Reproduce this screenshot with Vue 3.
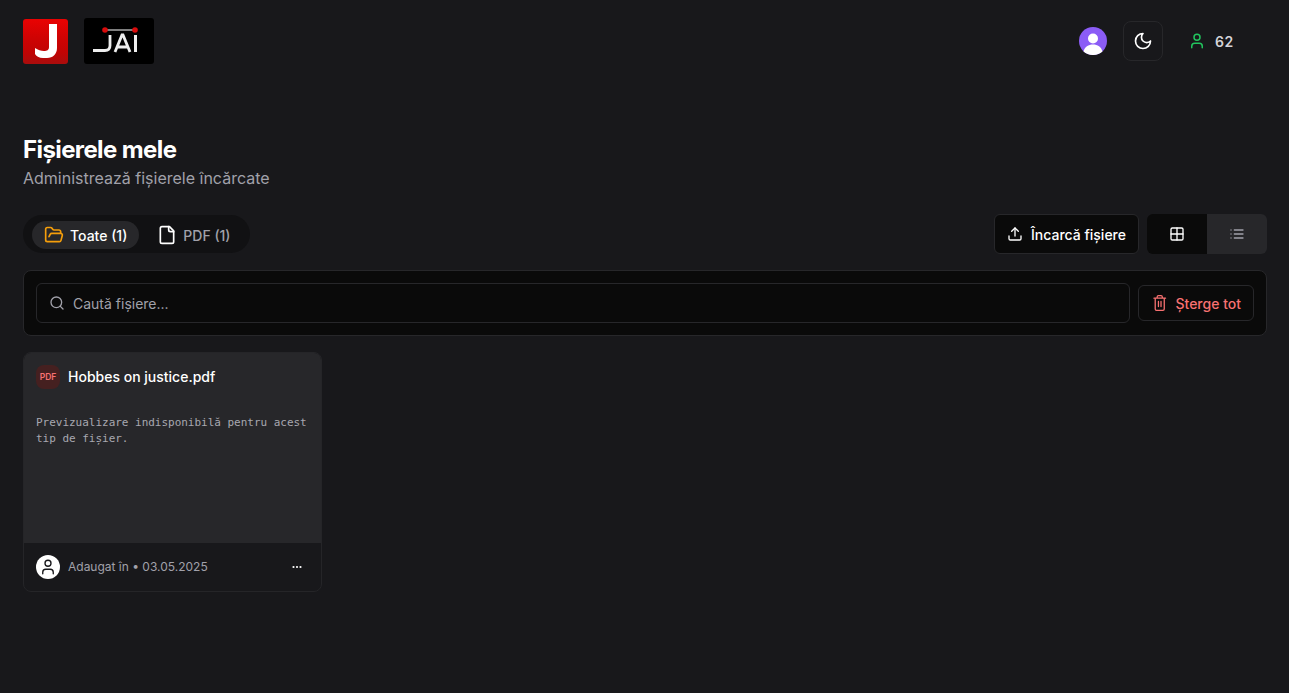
<template>
  <div class="page">
    <header class="topbar">
      <div class="logos">
        <div class="logo-j">
          <svg width="22" height="34" viewBox="0 0 22 34">
            <path d="M14 0h8v24c0 6-4 10-10 10H8c-4 0-7-2-8-4v-6c3 2 6 3 9 3 3 0 5-1 5-4z" fill="#fff" />
          </svg>
        </div>
        <div class="logo-jai">
          <svg width="70" height="46" viewBox="0 0 70 46">
            <line x1="21" y1="12" x2="51" y2="12" stroke="#aaa" stroke-width="1.5" />
            <circle cx="21" cy="12" r="2.8" fill="#d90b0b" />
            <circle cx="51" cy="12" r="2.8" fill="#d90b0b" />
            <path d="M26 17v10.500c0 3.500-1.500 5-5 5H9" fill="none" stroke="#eee" stroke-width="2.8" />
            <path d="M31 34l7-17h1l7 17M33.500 29h10" fill="none" stroke="#eee" stroke-width="2.8" />
            <line x1="51.500" y1="17" x2="51.500" y2="34" stroke="#eee" stroke-width="3" />
          </svg>
        </div>
      </div>
      <div class="top-actions">
        <div class="avatar">
          <svg width="28" height="28" viewBox="0 0 28 28">
            <circle cx="14" cy="14" r="14" fill="#8b5cf6" />
            <circle cx="14" cy="11.5" r="5" fill="#fff" />
            <path d="M4.500 24.500c1-4.500 5-7 9.500-7s8.500 2.500 9.500 7A14 14 0 0 1 14 28a14 14 0 0 1-9.500-3.500z" fill="#fff" />
          </svg>
        </div>
        <button class="theme-btn">
          <svg width="20" height="20" viewBox="0 0 24 24" fill="none" stroke="#fff" stroke-width="2" stroke-linecap="round" stroke-linejoin="round">
            <path d="M12 3a6 6 0 0 0 9 9 9 9 0 1 1-9-9Z" />
          </svg>
        </button>
        <div class="credits">
          <svg width="18" height="18" viewBox="0 0 24 24" fill="none" stroke="#22c55e" stroke-width="2" stroke-linecap="round" stroke-linejoin="round">
            <path d="M19 21v-2a4 4 0 0 0-4-4H9a4 4 0 0 0-4 4v2" />
            <circle cx="12" cy="7" r="4" />
          </svg>
          <span>62</span>
        </div>
      </div>
    </header>

    <main class="content">
      <h1>Fișierele mele</h1>
      <p class="subtitle">Administrează fișierele încărcate</p>

      <div class="toolbar">
        <div class="tabs">
          <button class="tab active">
            <svg width="20" height="20" viewBox="0 0 24 24" fill="none" stroke="#f59e0b" stroke-width="2" stroke-linecap="round" stroke-linejoin="round">
              <path d="m6 14 1.500-2.900A2 2 0 0 1 9.240 10H20a2 2 0 0 1 1.940 2.500l-1.540 6a2 2 0 0 1-1.950 1.500H4a2 2 0 0 1-2-2V5a2 2 0 0 1 2-2h3.900a2 2 0 0 1 1.690.9l.81 1.200a2 2 0 0 0 1.670.9H18a2 2 0 0 1 2 2v2" />
            </svg>
            Toate (1)
          </button>
          <button class="tab">
            <svg width="20" height="20" viewBox="0 0 24 24" fill="none" stroke="#fff" stroke-width="2" stroke-linecap="round" stroke-linejoin="round">
              <path d="M15 2H6a2 2 0 0 0-2 2v16a2 2 0 0 0 2 2h12a2 2 0 0 0 2-2V7Z" />
              <path d="M14 2v4a2 2 0 0 0 2 2h4" />
            </svg>
            PDF (1)
          </button>
        </div>
        <div class="tool-right">
          <button class="upload">
            <svg width="16" height="16" viewBox="0 0 24 24" fill="none" stroke="#fff" stroke-width="2" stroke-linecap="round" stroke-linejoin="round">
              <path d="M21 15v4a2 2 0 0 1-2 2H5a2 2 0 0 1-2-2v-4" />
              <polyline points="17 8 12 3 7 8" />
              <line x1="12" y1="3" x2="12" y2="15" />
            </svg>
            Încarcă fișiere
          </button>
          <div class="view-switch">
            <button class="view on">
              <svg width="16" height="16" viewBox="0 0 24 24" fill="none" stroke="#fff" stroke-width="2" stroke-linecap="round" stroke-linejoin="round">
                <rect x="3" y="3" width="18" height="18" rx="2" />
                <path d="M3 12h18M12 3v18" />
              </svg>
            </button>
            <button class="view">
              <svg width="16" height="16" viewBox="0 0 24 24" fill="none" stroke="#a1a1aa" stroke-width="2" stroke-linecap="round" stroke-linejoin="round">
                <path d="M8 6h13M8 12h13M8 18h13M3 6h.01M3 12h.01M3 18h.01" />
              </svg>
            </button>
          </div>
        </div>
      </div>

      <div class="filter-panel">
        <label class="search">
          <svg width="16" height="16" viewBox="0 0 24 24" fill="none" stroke="#a1a1aa" stroke-width="2" stroke-linecap="round" stroke-linejoin="round">
            <circle cx="11" cy="11" r="8" />
            <path d="m21 21-4.300-4.300" />
          </svg>
          <input type="text" placeholder="Caută fișiere..." />
        </label>
        <button class="delete-all">
          <svg width="16" height="18" viewBox="0 0 24 27" fill="none" stroke="#f87171" stroke-width="2" stroke-linecap="round" stroke-linejoin="round">
            <path d="M3 6h18M19 6v17a2 2 0 0 1-2 2H7a2 2 0 0 1-2-2V6M8 6V4a2 2 0 0 1 2-2h4a2 2 0 0 1 2 2v2M10 11v8M14 11v8" />
          </svg>
          Șterge tot
        </button>
      </div>

      <div class="grid">
        <article v-for="file in files" :key="file.name" class="card">
          <div class="card-top">
            <div class="card-head">
              <span class="pdf-badge">PDF</span>
              <span class="file-name">{{ file.name }}</span>
            </div>
            <pre class="preview">{{ file.preview }}</pre>
          </div>
          <div class="card-foot">
            <span class="owner">
              <svg width="18" height="18" viewBox="0 0 24 24" fill="none" stroke="#18181b" stroke-width="1.8" stroke-linecap="round" stroke-linejoin="round">
                <path d="M19 21v-2a4 4 0 0 0-4-4H9a4 4 0 0 0-4 4v2" />
                <circle cx="12" cy="7" r="4" />
              </svg>
            </span>
            <span class="meta">Adaugat în • {{ file.date }}</span>
            <button class="more">
              <svg width="16" height="16" viewBox="0 0 16 16" fill="#fff">
                <circle cx="4.500" cy="8" r="1.100" />
                <circle cx="8" cy="8" r="1.100" />
                <circle cx="11.500" cy="8" r="1.100" />
              </svg>
            </button>
          </div>
        </article>
      </div>
    </main>
  </div>
</template>

<script setup>
const files = [
  {
    name: 'Hobbes on justice.pdf',
    preview: 'Previzualizare indisponibilă pentru acest tip de fișier.',
    date: '03.05.2025',
  },
]
</script>

<style>
html,
body {
  margin: 0;
  background: #18181b;
}
</style>

<style scoped>
.page {
  min-height: 693px;
  background: #18181b;
  color: #fff;
  font-family: Inter, "Liberation Sans", sans-serif;
  box-sizing: border-box;
}

button {
  font-family: inherit;
  cursor: pointer;
}

.topbar {
  display: flex;
  justify-content: space-between;
  align-items: center;
  height: 82px;
  padding: 0 23px;
}

.logos {
  display: flex;
  align-items: center;
  gap: 16px;
}

.logo-j {
  width: 45px;
  height: 45px;
  border-radius: 3px;
  background: linear-gradient(#e90202 0%, #cd0303 45%, #c00404 75%, #a90d0d 100%);
  display: flex;
  align-items: center;
  justify-content: center;
}

.logo-jai {
  width: 70px;
  height: 46px;
  border-radius: 3px;
  background: #000;
}

.logo-jai svg {
  display: block;
}

.top-actions {
  display: flex;
  align-items: center;
  margin-right: 32px;
}

.avatar {
  width: 28px;
  height: 28px;
  margin-right: 16px;
}

.avatar svg {
  display: block;
}

.theme-btn {
  width: 40px;
  height: 40px;
  background: #18181b;
  border: 1px solid #27272a;
  border-radius: 8px;
  display: flex;
  align-items: center;
  justify-content: center;
  padding: 0;
}

.credits {
  display: flex;
  align-items: center;
  gap: 9px;
  margin-left: 25px;
  font-size: 14px;
  font-weight: 600;
  letter-spacing: 0.7px;
  color: #d4d4d8;
}

.content {
  padding: 0 22px 0 23px;
}

h1 {
  margin: 0;
  padding-top: 52px;
  font-size: 24px;
  line-height: 32px;
  font-weight: 700;
  letter-spacing: -0.6px;
}

.subtitle {
  margin: 0;
  font-size: 16px;
  line-height: 24px;
  color: #a1a1aa;
}

.toolbar {
  display: flex;
  justify-content: space-between;
  align-items: center;
  margin-top: 24px;
}

.tabs {
  display: flex;
  align-items: center;
  gap: 6px;
  height: 38px;
  box-sizing: border-box;
  padding: 2px 7px 0 9px;
  background: #111113;
  border-radius: 19px;
}

.tab {
  display: flex;
  align-items: center;
  gap: 6px;
  height: 28px;
  padding: 0 12px;
  border: none;
  border-radius: 14px;
  background: transparent;
  color: #a1a1aa;
  font-size: 14px;
  font-weight: 500;
}

.tab.active {
  background: #27272a;
  color: #fff;
}

.tool-right {
  display: flex;
  align-items: center;
  gap: 8px;
}

.upload {
  display: flex;
  align-items: center;
  gap: 8px;
  height: 40px;
  padding: 0 12px;
  background: #0a0a0a;
  border: 1px solid #27272a;
  border-radius: 6px;
  color: #fff;
  font-size: 14px;
  font-weight: 500;
}

.view-switch {
  display: flex;
  border-radius: 6px;
  overflow: hidden;
}

.view {
  width: 60px;
  height: 40px;
  padding: 0;
  border: none;
  background: #27272a;
  display: flex;
  align-items: center;
  justify-content: center;
}

.view.on {
  background: #0a0a0a;
}

.filter-panel {
  display: flex;
  align-items: center;
  gap: 8px;
  height: 66px;
  box-sizing: border-box;
  margin-top: 16px;
  padding: 0 12px;
  background: #0a0a0a;
  border: 1px solid #27272a;
  border-radius: 8px;
}

.search {
  flex: 1;
  display: flex;
  align-items: center;
  gap: 8px;
  height: 40px;
  padding: 0 12px;
  border: 1px solid #27272a;
  border-radius: 6px;
  box-sizing: border-box;
}

.search input {
  flex: 1;
  padding: 0;
  background: transparent;
  border: none;
  outline: none;
  color: #fff;
  font-family: inherit;
  font-size: 14px;
}

.search input::placeholder {
  color: #a1a1aa;
  opacity: 1;
}

.delete-all {
  display: flex;
  align-items: center;
  gap: 8px;
  height: 36px;
  padding: 0 12px 0 13px;
  margin-left: 0;
  width: 116px;
  background: transparent;
  border: 1px solid #27272a;
  border-radius: 6px;
  color: #f87171;
  font-size: 14px;
  font-weight: 500;
  white-space: nowrap;
  box-sizing: border-box;
}

.grid {
  display: grid;
  grid-template-columns: 299px;
  margin-top: 16px;
}

.card {
  border: 1px solid #252528;
  border-radius: 8px;
  overflow: hidden;
  background: #18181b;
}

.card-top {
  height: 190px;
  box-sizing: border-box;
  padding: 12px;
  background: #27272a;
}

.card-head {
  display: flex;
  align-items: center;
  gap: 8px;
}

.pdf-badge {
  width: 24px;
  height: 24px;
  border-radius: 8px;
  background: #452020;
  color: #f87171;
  font-size: 8.5px;
  font-weight: 600;
  display: flex;
  align-items: center;
  justify-content: center;
}

.file-name {
  font-size: 14px;
  line-height: 20px;
  font-weight: 500;
  color: #fff;
}

.preview {
  margin: 26px 0 0;
  font-family: "DejaVu Sans Mono", monospace;
  font-size: 11px;
  letter-spacing: -0.02px;
  line-height: 16px;
  color: #a8a8b0;
  white-space: pre-wrap;
}

.card-foot {
  display: flex;
  align-items: center;
  gap: 8px;
  height: 48px;
  padding: 0 12px;
}

.owner {
  width: 24px;
  height: 24px;
  border-radius: 50%;
  background: #fff;
  display: flex;
  align-items: center;
  justify-content: center;
}

.meta {
  flex: 1;
  font-size: 12px;
  line-height: 16px;
  color: #a1a1aa;
}

.more {
  width: 24px;
  height: 24px;
  padding: 0;
  border: none;
  background: transparent;
  display: flex;
  align-items: center;
  justify-content: center;
}
</style>
